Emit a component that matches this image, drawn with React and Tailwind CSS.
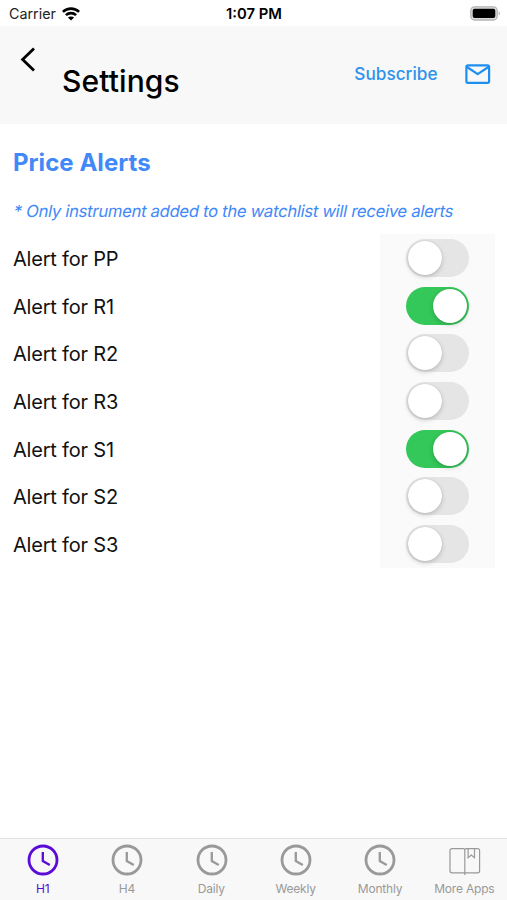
import { useState } from 'react'

const ALERTS = [
  { id: 'PP', enabled: false },
  { id: 'R1', enabled: true },
  { id: 'R2', enabled: false },
  { id: 'R3', enabled: false },
  { id: 'S1', enabled: true },
  { id: 'S2', enabled: false },
  { id: 'S3', enabled: false },
]

const TABS = ['H1', 'H4', 'Daily', 'Weekly', 'Monthly', 'More Apps']

function WifiIcon() {
  return (
    <svg width="18" height="14" viewBox="0 0 18 14" fill="none" stroke="#000" strokeWidth="2.6">
      <path d="M0.9 4.9C5.4 0.5 12.6 0.5 17.1 4.9" />
      <path d="M3.9 8.1C6.7 5.4 11.3 5.4 14.1 8.1" />
      <path d="M9 13.6L5.9 10.6C7.6 9.1 10.4 9.1 12.1 10.6Z" fill="#000" stroke="none" />
    </svg>
  )
}

function BatteryIcon() {
  return (
    <svg width="31" height="15" viewBox="0 0 31 15" fill="none">
      <rect x="0.8" y="0.8" width="26.4" height="13.2" rx="3.8" fill="#ddd" stroke="#b4b4b4" strokeWidth="1.3" />
      <rect x="2.7" y="2.7" width="22.6" height="9.4" rx="2" fill="#000" />
      <path d="M28.6 5.2C30.4 6 30.4 8.8 28.6 9.6Z" fill="#b4b4b4" />
    </svg>
  )
}

function BackIcon() {
  return (
    <svg width="16" height="26" viewBox="0 0 16 26" fill="none" stroke="#000" strokeWidth="2.8">
      <path d="M14 2.4L2.6 13.4L14 24.4" />
    </svg>
  )
}

function MailIcon() {
  return (
    <svg width="26" height="20" viewBox="0 0 26 20" fill="none" stroke="#1e8ef0" strokeWidth="2.2" strokeLinejoin="round">
      <rect x="1.4" y="1.4" width="22.7" height="17.4" rx="1.6" />
      <path d="M2 3L12.7 10.2L23.4 3" />
    </svg>
  )
}

function ClockIcon() {
  return (
    <svg width="32" height="32" viewBox="0 0 32 32" fill="none" stroke="currentColor">
      <circle cx="16" cy="16" r="14" strokeWidth="2.8" />
      <path d="M15.8 8V17L22.8 21" strokeWidth="2.3" />
    </svg>
  )
}

function BookIcon() {
  return (
    <svg width="32" height="32" viewBox="0 0 32 32" fill="none" stroke="currentColor" strokeWidth="1.2">
      <path d="M15.8 31V5.8C15.8 5 15.1 4.6 14.3 4.6H3C1.8 4.6 1 5.4 1 6.6V26.8C1 28 1.8 28.8 3 28.8H28.6C29.8 28.8 30.6 28 30.6 26.8V6.6C30.6 5.4 29.8 4.6 28.6 4.6H17.3C16.4 4.6 15.8 5 15.8 5.8" />
      <path d="M19.1 4.6V13.8L22.3 11L25.5 13.8V4.6" />
    </svg>
  )
}

function Toggle({ on, onChange }) {
  return (
    <button
      role="switch"
      aria-checked={on}
      onClick={onChange}
      className={`flex h-[38px] w-[63px] items-center rounded-full p-[2px] ${
        on ? 'justify-end bg-[#34c759]' : 'justify-start bg-[#e5e5e6]'
      }`}
    >
      <span className="h-[34px] w-[34px] rounded-full bg-white shadow-[0_2px_5px_rgba(0,0,0,0.18),0_0_1px_rgba(0,0,0,0.2)]" />
    </button>
  )
}

export default function App() {
  const [alerts, setAlerts] = useState(ALERTS)
  const [activeTab, setActiveTab] = useState('H1')

  const toggleAlert = (id) => {
    setAlerts((prev) =>
      prev.map((alert) => (alert.id === id ? { ...alert, enabled: !alert.enabled } : alert))
    )
  }

  return (
    <div className="flex h-[900px] w-[507px] flex-col overflow-hidden bg-white font-['Inter',sans-serif] text-black">
      {/* Status bar */}
      <div className="grid h-[26px] shrink-0 grid-cols-3 items-center pr-[6px] pl-[9px]">
        <div className="flex items-center gap-[6px] pt-px text-[14.3px] text-[#222]">
          <span>Carrier</span>
          <WifiIcon />
        </div>
        <span className="pt-px pr-[2px] text-center text-[14.8px] leading-[20px] font-semibold">1:07 PM</span>
        <div className="flex justify-end">
          <BatteryIcon />
        </div>
      </div>

      {/* Header */}
      <header className="flex h-[98px] shrink-0 items-start bg-[#f8f8f8] pr-[16px] pl-[20px]">
        <button aria-label="Back" className="mt-[20px]">
          <BackIcon />
        </button>
        <h1 className="mt-[34px] ml-[26px] flex-1 text-[30px] leading-[42px] font-medium tracking-[0.1px]">Settings</h1>
        <button className="mt-[36px] text-[17.2px] leading-[24px] font-medium text-[#2d92ee]">Subscribe</button>
        <button aria-label="Contact" className="mt-[38px] ml-[27.5px]">
          <MailIcon />
        </button>
      </header>

      <main className="flex-1 pl-[13px]">
        <h2 className="mt-[23px] text-[24px] leading-[32px] font-bold tracking-[0.05px] text-[#4189f8]">Price Alerts</h2>
        <p className="mt-[21px] ml-px w-fit -skew-x-[11deg] text-[16.6px] leading-[22px] tracking-[-0.27px] whitespace-nowrap text-[#4189f8]">
          * Only instrument added to the watchlist will receive alerts
        </p>

        <div className="mt-[12px] flex h-[334px] justify-between pr-[12px]">
          <ul className="grid flex-1 grid-rows-7 pt-px">
            {alerts.map((alert) => (
              <li key={alert.id} className="flex items-center pt-px text-[20px] tracking-[-0.2px] text-[#111]">
                Alert for {alert.id}
              </li>
            ))}
          </ul>
          <div className="grid w-[115px] grid-rows-7 items-center justify-items-center bg-[#fafafa]">
            {alerts.map((alert) => (
              <Toggle key={alert.id} on={alert.enabled} onChange={() => toggleAlert(alert.id)} />
            ))}
          </div>
        </div>
      </main>

      {/* Bottom tabs */}
      <nav className="grid h-[62px] shrink-0 grid-cols-6 border-t border-[#e2e2e2] bg-[#f8f8f8] pl-px">
        {TABS.map((tab) => (
          <button
            key={tab}
            onClick={() => setActiveTab(tab)}
            className={`flex flex-col items-center pt-[5px] ${
              activeTab === tab ? 'text-[#5a0bd8]' : 'text-[#999]'
            }`}
          >
            {tab === 'More Apps' ? <BookIcon /> : <ClockIcon />}
            <span className="mt-[5px] pr-px text-[12px] leading-[16px] tracking-[-0.2px] whitespace-nowrap">{tab}</span>
          </button>
        ))}
      </nav>
    </div>
  )
}
